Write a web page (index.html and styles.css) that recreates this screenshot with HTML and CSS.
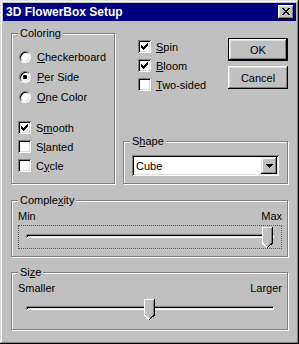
FILE: index.html
```html
<!DOCTYPE html>
<html lang="en">
<head>
  <meta charset="UTF-8" />
  <title>3D FlowerBox Setup</title>
  <link rel="stylesheet" href="styles.css">
</head>
<body>
  <div class="window">
    <div class="titlebar">
      <span class="title">3D FlowerBox Setup</span>
      <button class="close-btn" aria-label="Close">
        <svg width="8" height="7" viewBox="0 0 8 7" shape-rendering="crispEdges">
          <path d="M0 0h2v1h-2z M6 0h2v1h-2z M1 1h2v1h-2z M5 1h2v1h-2z M2 2h4v1h-4z M3 3h2v1h-2z M2 4h4v1h-4z M1 5h2v1h-2z M5 5h2v1h-2z M0 6h2v1h-2z M6 6h2v1h-2z" fill="#000"/>
        </svg>
      </button>
    </div>

    <div class="content">
      <div class="top">
        <fieldset class="group coloring">
          <legend>Coloring</legend>
          <div class="opt"><span class="radio"></span><span><u>C</u>heckerboard</span></div>
          <div class="opt"><span class="radio on"></span><span><u>P</u>er Side</span></div>
          <div class="opt"><span class="radio"></span><span><u>O</u>ne Color</span></div>
          <div class="checks">
            <div class="opt chk"><span class="check on"></span><span>S<u>m</u>ooth</span></div>
            <div class="opt chk"><span class="check"></span><span>S<u>l</u>anted</span></div>
            <div class="opt chk"><span class="check"></span><span>C<u>y</u>cle</span></div>
          </div>
        </fieldset>

        <div class="right">
          <div class="right-top">
            <div class="flags">
              <div class="opt chk"><span class="check on"></span><span><u>S</u>pin</span></div>
              <div class="opt chk"><span class="check on"></span><span><u>B</u>loom</span></div>
              <div class="opt chk"><span class="check"></span><span><u>T</u>wo-sided</span></div>
            </div>
            <div class="buttons">
              <button class="btn default">OK</button>
              <button class="btn">Cancel</button>
            </div>
          </div>

          <fieldset class="group shape">
            <legend>S<u>h</u>ape</legend>
            <div class="combo">
              <span class="combo-text">Cube</span>
              <span class="combo-btn">
                <svg width="7" height="4" viewBox="0 0 7 4" shape-rendering="crispEdges">
                  <path d="M0 0h7v1h-1v1h-1v1h-1v1h-1v-1h-1v-1h-1v-1h-1z" fill="#000"/>
                </svg>
              </span>
            </div>
          </fieldset>
        </div>
      </div>

      <fieldset class="group wide complexity">
        <legend>Comple<u>x</u>ity</legend>
        <div class="ends"><span>Min</span><span>Max</span></div>
        <div class="slider focused" style="--pos: 1">
          <div class="track"></div>
          <svg class="thumb" width="11" height="21" viewBox="0 0 11 21" shape-rendering="crispEdges">
            <path d="M0 0H11V16L5.5 21L0 16Z" fill="#c0c0c0"/>
            <path d="M0.5 16V0.5H10" stroke="#fff" fill="none"/>
            <path d="M0.5 16L5 20.5" stroke="#fff" fill="none"/>
            <path d="M10.5 0V16L5.5 20.5" stroke="#000" fill="none"/>
            <path d="M9.5 1V15.5L5.5 19.5" stroke="#808080" fill="none"/>
          </svg>
        </div>
      </fieldset>

      <fieldset class="group wide size">
        <legend>Si<u>z</u>e</legend>
        <div class="ends"><span>Smaller</span><span>Larger</span></div>
        <div class="slider" style="--pos: 0.5">
          <div class="track"></div>
          <svg class="thumb" width="11" height="21" viewBox="0 0 11 21" shape-rendering="crispEdges">
            <path d="M0 0H11V16L5.5 21L0 16Z" fill="#c0c0c0"/>
            <path d="M0.5 16V0.5H10" stroke="#fff" fill="none"/>
            <path d="M0.5 16L5 20.5" stroke="#fff" fill="none"/>
            <path d="M10.5 0V16L5.5 20.5" stroke="#000" fill="none"/>
            <path d="M9.5 1V15.5L5.5 19.5" stroke="#808080" fill="none"/>
          </svg>
        </div>
      </fieldset>
    </div>
  </div>
</body>
</html>
```

FILE: styles.css
```css
body {
  margin: 0;
  font-family: "Liberation Sans", Arial, sans-serif;
  font-size: 11px;
  color: #000;
  background: #c0c0c0;
}

.window {
  width: 299px;
  height: 344px;
  box-sizing: border-box;
  padding: 3px;
  background: #c0c0c0;
  box-shadow: inset -1px -1px #000, inset 1px 1px #dfdfdf, inset -2px -2px #808080, inset 2px 2px #fff;
}

.titlebar {
  height: 18px;
  background: #000080;
  color: #fff;
  display: flex;
  align-items: center;
  justify-content: space-between;
  padding: 0 2px 0 3px;
}

.title {
  font-weight: bold;
  font-size: 12px;
}

.close-btn {
  width: 16px;
  height: 14px;
  padding: 0 0 1px 0;
  border: 0;
  background: #c0c0c0;
  display: flex;
  align-items: center;
  justify-content: center;
  box-shadow: inset -1px -1px #000, inset 1px 1px #fff, inset -2px -2px #808080, inset 2px 2px #dfdfdf;
}

.content {
  padding: 6px 8px 0 8px;
}

.top {
  display: flex;
  gap: 8px;
}

/* group boxes */
.group {
  margin: 0;
  min-width: 0;
  border: 1px solid #808080;
  box-shadow: inset 1px 1px #fff, 1px 1px #fff;
  padding: 7px 5px 8px 6px;
}

.group legend {
  padding: 0 2px;
  line-height: 13px;
  background: #c0c0c0;
}

.coloring {
  width: 104px;
  box-sizing: border-box;
}

.opt {
  display: flex;
  align-items: center;
  height: 20px;
  white-space: nowrap;
}

.opt.chk {
  height: 19px;
}

.checks {
  margin-top: 11px;
}

.radio {
  width: 12px;
  height: 12px;
  box-sizing: border-box;
  border-radius: 50%;
  background: #fff;
  border: 1px solid;
  border-color: #808080 #fff #fff #808080;
  box-shadow: inset 1px 1px #000, inset -1px -1px #dfdfdf;
  margin: 0 6px 0 1px;
  display: flex;
  align-items: center;
  justify-content: center;
  flex: none;
}

.radio.on::after {
  content: "";
  width: 4px;
  height: 4px;
  border-radius: 1px;
  background: #000;
}

.check {
  width: 13px;
  height: 13px;
  box-sizing: border-box;
  background: #fff;
  box-shadow: inset 1px 1px #808080, inset -1px -1px #fff, inset 2px 2px #000, inset -2px -2px #dfdfdf;
  margin-right: 5px;
  flex: none;
}

.check.on {
  background: #fff url("data:image/svg+xml,%3Csvg xmlns='http://www.w3.org/2000/svg' width='7' height='7' shape-rendering='crispEdges'%3E%3Cpath d='M6 0h1v1h-1z M5 1h2v1h-2z M0 2h1v1h-1z M4 2h3v1h-3z M0 3h2v1h-2z M3 3h3v1h-3z M0 4h5v1h-5z M1 5h3v1h-3z M2 6h1v1h-1z'/%3E%3C/svg%3E") no-repeat 3px 3px;
}

/* right column */
.right {
  flex: 1;
  display: flex;
  flex-direction: column;
}

.right-top {
  display: flex;
  justify-content: space-between;
  padding-left: 15px;
}

.flags {
  margin-top: 10px;
}

.buttons {
  margin-top: 11px;
  display: flex;
  flex-direction: column;
  gap: 5px;
}

.btn {
  width: 60px;
  height: 23px;
  box-sizing: border-box;
  border: 0;
  padding: 0;
  background: #c0c0c0;
  font-family: "Liberation Sans", Arial, sans-serif;
  font-size: 11px;
  color: #000;
  box-shadow: inset -1px -1px #000, inset 1px 1px #fff, inset -2px -2px #808080, inset 2px 2px #dfdfdf;
}

.btn.default {
  box-shadow: inset 0 0 0 1px #000, inset -2px -2px #000, inset 2px 2px #fff, inset -3px -3px #808080, inset 3px 3px #dfdfdf;
}

.shape {
  margin-top: auto;
  padding: 7px 8px 7px 8px;
}

.shape legend {
  margin-left: -2px;
}

.combo {
  height: 21px;
  box-sizing: border-box;
  padding: 2px;
  display: flex;
  align-items: center;
  background: #fff;
  box-shadow: inset 1px 1px #808080, inset -1px -1px #fff, inset 2px 2px #000, inset -2px -2px #dfdfdf;
}

.combo-text {
  flex: 1;
  padding-left: 2px;
}

.combo-btn {
  width: 16px;
  height: 17px;
  box-sizing: border-box;
  padding-top: 1px;
  display: flex;
  align-items: center;
  justify-content: center;
  background: #c0c0c0;
  box-shadow: inset -1px -1px #000, inset 1px 1px #dfdfdf, inset -2px -2px #808080, inset 2px 2px #fff;
}

/* sliders */
.wide {
  margin-top: 10px;
  padding: 3px 5px 7px 6px;
}

.size {
  margin-top: 9px;
  padding-bottom: 8px;
}

.ends {
  display: flex;
  justify-content: space-between;
  line-height: 13px;
}

.slider {
  position: relative;
  height: 24px;
  margin-top: 2px;
  box-sizing: border-box;
  border: 1px solid transparent;
}

.slider.focused {
  border: 1px dotted #555;
}

.track {
  height: 4px;
  margin: 8px 7px 0 7px;
  box-shadow: inset 1px 1px #808080, inset -1px -1px #fff, inset 2px 2px #000, inset -2px -2px #dfdfdf;
}

.thumb {
  position: absolute;
  top: 1px;
  left: calc(7px + var(--pos) * (100% - 26px));
}
```
